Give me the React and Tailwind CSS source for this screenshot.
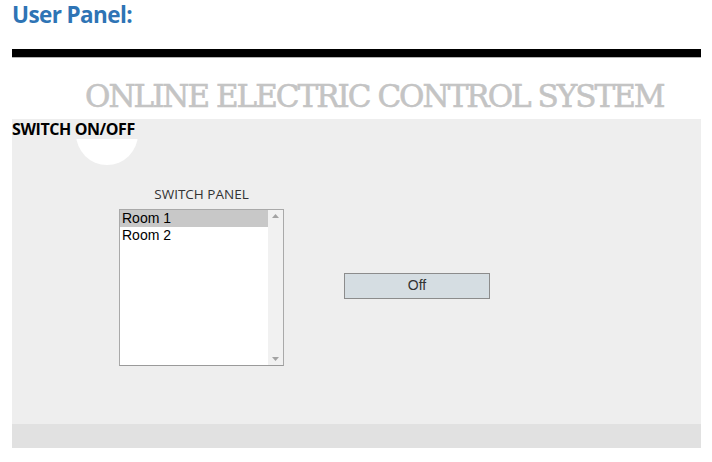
export default function App() {
  const rooms = ["Room 1", "Room 2"];
  return (
    <div className="w-[712px] h-[462px] bg-white overflow-hidden">
      <div className="pl-3 pr-[11px]">
        <h1 className="h-[49px] text-[22.5px] leading-[30px] font-bold text-[#2e74b5] font-['Open_Sans','Noto_Sans',sans-serif] tracking-[-0.6px]">
          User Panel:
        </h1>
        <div className="h-[8px] bg-black" />
        <div className="h-[1px] bg-[#b4b4b4]" />
        <div className="h-[61px] flex items-end pl-[73px] pb-[7px]">
          <span className="text-[31px] leading-none text-[#c4c4c4] font-['DejaVu_Serif',serif] tracking-[-2px] whitespace-nowrap [-webkit-text-stroke:0.6px_#c4c4c4]">
            ONLINE ELECTRIC CONTROL SYSTEM
          </span>
        </div>
        <div className="relative bg-[#eeeeee] h-[305px] overflow-hidden">
          <div className="absolute left-[64px] top-[-16px] w-[62px] h-[62px] rounded-full bg-white" />
          <div className="relative h-[20px] bg-[#eeeeee] text-[16px] leading-[20px] font-bold text-black font-['Open_Sans','Noto_Sans',sans-serif] tracking-[-0.4px]">
            SWITCH ON/OFF
          </div>
          <div className="flex pt-[45px]">
            <div className="ml-[107px] w-[165px] flex flex-col">
              <div className="h-[25px] text-center text-[13.5px] leading-[20px] text-[#333333] font-['Open_Sans','Noto_Sans',sans-serif]">
                SWITCH PANEL
              </div>
              <div className="h-[157px] border border-[#a9a9a9] border-b-[#9a9a9a] bg-white flex">
                <div className="flex-1 flex flex-col">
                  {rooms.map((r, i) => (
                    <div
                      key={r}
                      className={`h-[17px] pl-[2px] text-[14px] leading-[17px] text-black font-['Liberation_Sans',Arial,sans-serif] ${i === 0 ? "bg-[#c8c8c8]" : ""}`}
                    >
                      {r}
                    </div>
                  ))}
                </div>
                <div className="w-[15px] bg-[#f1f1f1] flex flex-col justify-between items-center py-[4px]">
                  <svg width="7" height="4" viewBox="0 0 7 4"><path d="M0 4 L3.5 0 L7 4 Z" fill="#a3a3a3" /></svg>
                  <svg width="7" height="4" viewBox="0 0 7 4"><path d="M0 0 L3.5 4 L7 0 Z" fill="#a3a3a3" /></svg>
                </div>
              </div>
            </div>
            <div className="ml-[60px] pt-[88px]">
              <button className="w-[146px] h-[26px] bg-[#d5dde2] border border-[#8c8c8c] text-[14px] text-[#333333] font-['Liberation_Sans',Arial,sans-serif]">
                Off
              </button>
            </div>
          </div>
        </div>
        <div className="h-[24px] bg-[#e1e1e1]" />
      </div>
    </div>
  );
}
